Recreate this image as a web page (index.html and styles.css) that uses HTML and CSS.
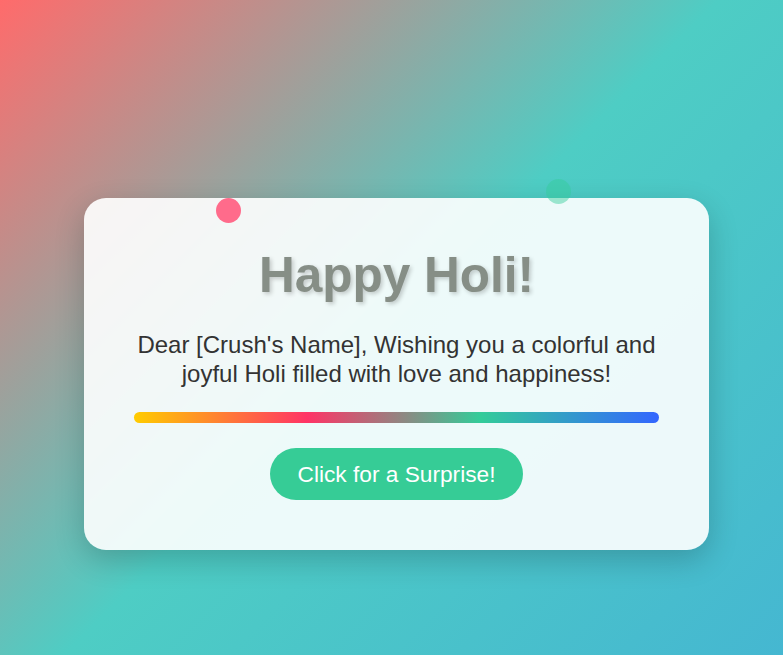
FILE: index.html
```html
<!DOCTYPE html>
<html lang="en">
<head>
<meta charset="utf-8">
<title>Happy Holi</title>
<link rel="stylesheet" href="styles.css">
</head>
<body>
<main class="stage">
  <section class="card">
    <h1 class="title">Happy Holi!</h1>
    <p class="message">Dear [Crush's Name], Wishing you a colorful and joyful Holi filled with love and happiness!</p>
    <div class="color-bar"></div>
    <button class="surprise-btn" type="button">Click for a Surprise!</button>
  </section>
  <span class="dot dot-pink"></span>
  <span class="dot dot-green"></span>
</main>
</body>
</html>
```
FILE: styles.css
```css
html, body {
  margin: 0;
  height: 100%;
}
body {
  font-family: "Liberation Sans", Arial, sans-serif;
  background: linear-gradient(135deg, #ff6b6b 0%, #4ecdc4 50%, #45b7d1 100%);
  overflow: hidden;
}
.stage {
  position: relative;
  height: 100%;
  box-sizing: border-box;
  padding: 198px 0 0 84px;
}
.card {
  width: 625px;
  box-sizing: border-box;
  padding: 49px 50px 50px;
  background: rgba(255, 255, 255, 0.9);
  border-radius: 22px;
  box-shadow: 0 10px 30px rgba(0, 0, 0, 0.2);
  text-align: center;
}
.title {
  margin: 0 0 27px;
  font-size: 49.5px;
  line-height: 56px;
  font-weight: bold;
  color: #868e86;
  text-shadow: 2px 2px 4px rgba(0, 0, 0, 0.2);
}
.message {
  margin: 0 0 24px;
  font-size: 24px;
  line-height: 29px;
  color: #333;
}
.color-bar {
  height: 11px;
  border-radius: 6px;
  background: linear-gradient(90deg, #ffcc00 0%, #ff3366 33%, #33cc99 66%, #3366ff 100%);
  margin-bottom: 25px;
}
.surprise-btn {
  font-family: inherit;
  font-size: 22.7px;
  line-height: 26px;
  color: #fff;
  background: #36cc96;
  border: none;
  border-radius: 30px;
  padding: 13px 27.5px;
  cursor: pointer;
}
.dot {
  position: absolute;
  width: 25px;
  height: 25px;
  border-radius: 50%;
}
.dot-pink {
  left: 216px;
  top: 198px;
  background: #ff6b8b;
}
.dot-green {
  left: 546px;
  top: 179px;
  background: #33cc99;
  opacity: 0.45;
}
```
